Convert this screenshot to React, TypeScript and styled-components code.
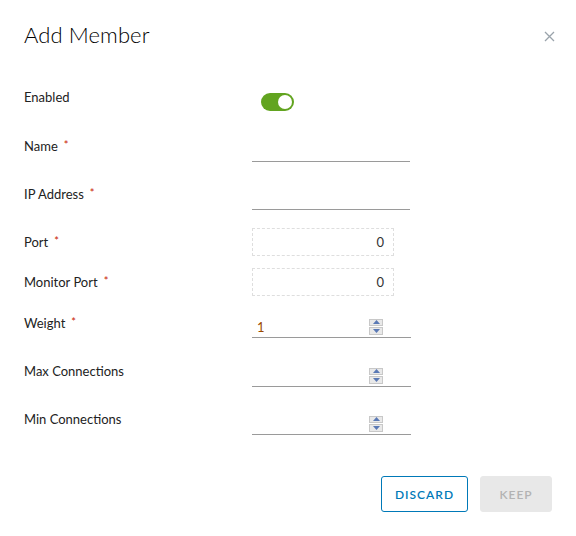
import styled, { createGlobalStyle } from 'styled-components';

const GlobalStyle = createGlobalStyle`
  html, body {
    margin: 0;
    padding: 0;
    background: #fff;
  }
  body {
    font-family: Lato, "Noto Sans", "Liberation Sans", sans-serif;
    color: #222;
  }
`

type FieldRow = {
  label: string;
  required?: boolean;
  kind: 'toggle' | 'line' | 'box' | 'number';
  value?: string;
  top: number;
}

const rows: FieldRow[] = [
  { label: 'Enabled', kind: 'toggle', top: 0 },
  { label: 'Name', required: true, kind: 'line', top: 26 },
  { label: 'IP Address', required: true, kind: 'line', top: 23 },
  { label: 'Port', required: true, kind: 'box', value: '0', top: 18 },
  { label: 'Monitor Port', required: true, kind: 'box', value: '0', top: 12 },
  { label: 'Weight', required: true, kind: 'number', value: '1', top: 18 },
  { label: 'Max Connections', kind: 'number', top: 25 },
  { label: 'Min Connections', kind: 'number', top: 24 },
]

const Spinner = () => (
  <SpinBox>
    <SpinHalf>
      <svg width="7" height="4" viewBox="0 0 7 4"><path d="M0 4 L3.5 0 L7 4 Z" fill="#5a79b5" /></svg>
    </SpinHalf>
    <SpinHalf>
      <svg width="7" height="4" viewBox="0 0 7 4"><path d="M0 0 L3.5 4 L7 0 Z" fill="#5a79b5" /></svg>
    </SpinHalf>
  </SpinBox>
)

export default function App() {
  return (
    <Modal>
      <GlobalStyle />
      <Header>
        <Title>Add Member</Title>
        <Close aria-label="close">
          <svg width="11" height="11" viewBox="0 0 11 11">
            <path d="M1 1 L10 10 M10 1 L1 10" stroke="#9aa3ab" strokeWidth="1.3" />
          </svg>
        </Close>
      </Header>

      <Form>
        {rows.map((r) => (
          <Row key={r.label} $top={r.top}>
            <Label $boxed={r.kind === 'box'}>
              {r.label}
              {r.required && <Req>*</Req>}
            </Label>
            {r.kind === 'toggle' && (
              <Toggle>
                <Knob />
              </Toggle>
            )}
            {r.kind === 'line' && <LineInput />}
            {r.kind === 'box' && <BoxInput>{r.value}</BoxInput>}
            {r.kind === 'number' && (
              <NumberInput>
                <NumValue>{r.value}</NumValue>
                <Spinner />
              </NumberInput>
            )}
          </Row>
        ))}
      </Form>

      <Footer>
        <OutlineButton>Discard</OutlineButton>
        <DisabledButton>Keep</DisabledButton>
      </Footer>
    </Modal>
  )
}

const Modal = styled.div`
  width: 576px;
  height: 536px;
  box-sizing: border-box;
  padding: 0 24px 0 24px;
  display: flex;
  flex-direction: column;
  background: #fff;
`

const Header = styled.div`
  display: flex;
  justify-content: space-between;
  align-items: center;
  height: 70px;
`

const Title = styled.h1`
  margin: 0;
  font-size: 22px;
  font-weight: 300;
  color: #000;
  letter-spacing: 0.1px;
  margin-top: -2px;
`

const Close = styled.button`
  border: none;
  background: none;
  padding: 0;
  margin-right: -3px;
  margin-top: 2px;
  display: flex;
  cursor: pointer;
`

const Form = styled.div`
  display: flex;
  flex-direction: column;
  margin-top: 19px;
`

const Row = styled.div<{ $top: number }>`
  display: grid;
  grid-template-columns: 228px 1fr;
  align-items: start;
  margin-top: ${(p) => p.$top}px;
`

const Label = styled.div<{ $boxed?: boolean }>`
  font-size: 13px;
  line-height: 16px;
  color: #222;
  padding-top: ${(p) => (p.$boxed ? 5 : 0)}px;
`

const Req = styled.span`
  color: #c92100;
  font-size: 11px;
  margin-left: 6px;
  vertical-align: 2px;
`

const Toggle = styled.div`
  margin-top: 4px;
  margin-left: 9px;
  width: 33px;
  height: 18px;
  border-radius: 9px;
  background: #62a420;
  position: relative;
`

const Knob = styled.span`
  position: absolute;
  right: 2px;
  top: 2px;
  width: 14px;
  height: 14px;
  border-radius: 50%;
  background: #fff;
`

const LineInput = styled.div`
  width: 158px;
  height: 24px;
  border-bottom: 1px solid #9a9a9a;
`

const BoxInput = styled.div`
  width: 142px;
  height: 28px;
  box-sizing: border-box;
  border: 1px dashed #dedede;
  text-align: right;
  padding-right: 9px;
  font-size: 13px;
  line-height: 26px;
  color: #333;
`

const NumberInput = styled.div`
  width: 159px;
  height: 24px;
  border-bottom: 1px solid #9a9a9a;
  display: flex;
  align-items: center;
  justify-content: space-between;
  padding-left: 5px;
  padding-right: 28px;
  box-sizing: border-box;
`

const NumValue = styled.span`
  font-size: 13px;
  color: #9c4a00;
  margin-top: 2px;
`

const SpinBox = styled.div`
  width: 14px;
  height: 16px;
  display: flex;
  flex-direction: column;
  gap: 1px;
  margin-top: 2px;
`

const SpinHalf = styled.span`
  flex: 1;
  background: #e9e9e9;
  border: 1px solid #c8c8c8;
  display: flex;
  align-items: center;
  justify-content: center;
`

const Footer = styled.div`
  margin-top: auto;
  margin-bottom: 24px;
  display: flex;
  justify-content: flex-end;
  gap: 12px;
`

const ButtonBase = styled.button`
  height: 36px;
  box-sizing: border-box;
  border-radius: 3px;
  font-family: Lato, "Noto Sans", "Liberation Sans", sans-serif;
  font-size: 12px;
  font-weight: 600;
  letter-spacing: 1px;
  text-transform: uppercase;
  padding: 0 12px;
`

const OutlineButton = styled(ButtonBase)`
  width: 87px;
  border: 1px solid #0079b8;
  background: #fff;
  color: #0079b8;
  cursor: pointer;
`

const DisabledButton = styled(ButtonBase)`
  width: 72px;
  border: 1px solid #e8e8e8;
  background: #e8e8e8;
  color: #b3b3b3;
  cursor: not-allowed;
`
